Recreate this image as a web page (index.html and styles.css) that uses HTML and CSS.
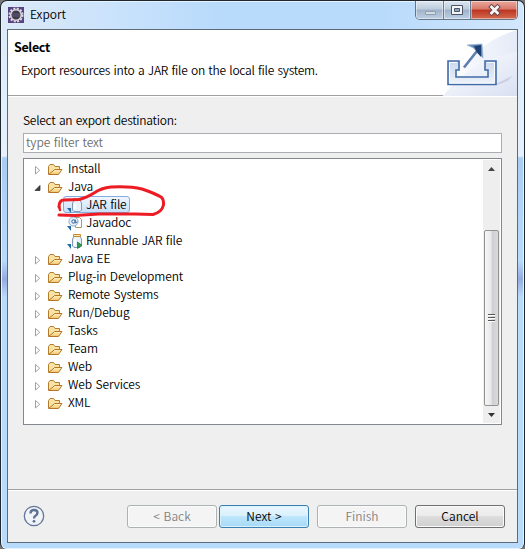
FILE: index.html
```
<!DOCTYPE html>
<html>
<head>
<meta charset="utf-8">
<title>Export</title>
<link rel="stylesheet" href="styles.css">
</head>
<body>
<svg class="defs" width="0" height="0">
  <defs>
    <linearGradient id="gold" x1="0" y1="0" x2="0" y2="1"><stop offset="0" stop-color="#fff3c4"/><stop offset="1" stop-color="#f1c56c"/></linearGradient>
    <linearGradient id="steel" x1="0" y1="0" x2="0" y2="1"><stop offset="0" stop-color="#cbd8ec"/><stop offset="1" stop-color="#eef3fa"/></linearGradient>
    <symbol id="folder" viewBox="0 0 16 16">
      <path d="M1.500 13V5.500L3 3.500h3.500l1.500 2h4.500v3" fill="#f9e3a4" stroke="#b57c2d"/>
      <path d="M1.500 13.500L6 10l1.500-1.500h7.500l-3.500 5z" fill="url(#gold)" stroke="#b57627"/>
    </symbol>
    <symbol id="closed" viewBox="0 0 8 10"><path d="M1.500 1.500v7.500l4.200-3.750z" fill="#fff" stroke="#a2a2a2"/></symbol>
    <symbol id="open" viewBox="0 0 8 10"><path d="M6 2.500v5H1z" fill="#444" stroke="#222" stroke-width=".7"/></symbol>
    <symbol id="jar" viewBox="0 0 17 16">
      <path d="M7 3.500L5.500 6v7L7 14.500h6l1.500-1.500V6L13 3.500z" fill="#e9f1fb" stroke="#8199b9"/>
      <path d="M8 6v6" stroke="#fff" stroke-width="2"/>
      <path d="M6.500 1.500h7v2h-7z" fill="#fce9b0" stroke="#c18a30"/>
    </symbol>
    <symbol id="corner" viewBox="0 0 5 5"><path d="M0 0h4v5z" fill="#206aa5"/></symbol>
  </defs>
</svg>

<div class="window">
  <div class="titlebar">
    <svg class="app-icon" width="16" height="16" viewBox="0 0 16 16">
      <path d="M0 0h16v16H0z" fill="#594383"/>
      <circle cx="8" cy="8" r="6.500" fill="none" stroke="#dedbe4" stroke-width="2" stroke-dasharray="2 1.400"/>
      <circle cx="8" cy="8" r="5.300" fill="#3d394c" stroke="#d8d8d8" stroke-width="1.600"/>
      <path d="M4 7h8M4 9h8" stroke="#655e78"/>
    </svg>
    <span class="caption">Export</span>
    <div class="controls">
      <div class="control minimize"><svg width="28" height="19"><path d="M9.500 10.500h10v3h-10z" fill="#d4dce5" stroke="#929faf"/></svg></div>
      <div class="control maximize"><svg width="26" height="19"><path d="M7.500 4.500h11v9h-11z" fill="#f3f4f6" stroke="#4d5669"/><path d="M10.500 7.500h5v3h-5z" fill="#8ea5bd" stroke="#4d5669"/></svg></div>
      <div class="control close"><svg width="46" height="19"><path d="M20.500 6l6 6M26.500 6l-6 6" stroke="#64474c" stroke-width="4.600" stroke-linecap="square"/><path d="M20.500 6l6 6M26.500 6l-6 6" stroke="#f6f6f6" stroke-width="2.700" stroke-linecap="square"/></svg></div>
    </div>
  </div>

  <div class="client">
    <div class="header">
      <div class="heading">
        <h1>Select</h1>
        <p>Export resources into a JAR file on the local file system.</p>
      </div>
      <svg class="banner" width="80" height="66" viewBox="0 0 80 66">
        <defs>
          <linearGradient id="sweep" x1="0" y1="0" x2="1" y2="0"><stop offset="0" stop-color="#fff"/><stop offset="1" stop-color="#e4eaf7"/></linearGradient>
          <linearGradient id="sweep2" x1="0" y1="0" x2="1" y2="1"><stop offset="0" stop-color="#fff"/><stop offset="1" stop-color="#d8e0f2"/></linearGradient>
        </defs>
        <path d="M80 0Q30 15 6 66h74z" fill="url(#sweep)"/>
        <path d="M80 22Q35 28 6 66h74z" fill="url(#sweep2)"/>
        <path d="M59 54l16-8q-3 6-16 9z" fill="#c8c7dc" opacity=".8"/>
        <path d="M11 31h11v9h-3v7h32v-7h-3v-9h11v23.500H11z" fill="url(#steel)" stroke="#426ba8" stroke-width="1.600"/>
        <path d="M20 32.500h-7.500V53h45V32.500H50" fill="none" stroke="#f7faff"/>
        <path d="M27 37.500L40 21" stroke="#5b7db0" stroke-width="2.600"/>
        <path d="M30 15l15-1 1 14-5-5-4.500-5z" fill="#5f88b8" stroke="#9fb7d4" stroke-width=".8"/>
        <path d="M37 16l7-1v12l-4.500-5z" fill="#1f4274"/>
      </svg>
    </div>

    <div class="body">
      <div class="label">Select an export destination:</div>
      <input class="filter" type="text" placeholder="type filter text">
      <div class="tree">
        <ul class="items">
          <li><svg class="arrow"><use href="#closed"/></svg><svg class="icon"><use href="#folder"/></svg><span>Install</span></li>
          <li><svg class="arrow"><use href="#open"/></svg><svg class="icon"><use href="#folder"/></svg><span>Java</span></li>
          <li class="leaf selected"><svg class="icon" viewBox="0 0 17 16"><use href="#jar"/><use href="#corner" x="0" y="11" width="5" height="5"/></svg><span>JAR file</span></li>
          <li class="leaf"><svg class="icon" viewBox="0 0 17 16"><path d="M8.500 2.500h4l2 2v8h-6z" fill="#fff" stroke="#a79970"/><circle cx="6.500" cy="6.500" r="4.600" fill="#e6eff9" stroke="#8aa9cd"/><circle cx="6.500" cy="6.500" r="1.700" fill="none" stroke="#31659d"/><path d="M8.200 4.500v3.300q1.500.7 1.800-1.300" fill="none" stroke="#31659d"/><use href="#corner" x="0" y="11" width="5" height="5"/></svg><span>Javadoc</span></li>
          <li class="leaf"><svg class="icon" viewBox="0 0 17 16"><use href="#jar"/><path d="M10.500 9l4.500 3.200-4.500 3.300z" fill="#2f9b51" stroke="#137135" stroke-width=".7"/><use href="#corner" x="0" y="11" width="5" height="5"/></svg><span>Runnable JAR file</span></li>
          <li><svg class="arrow"><use href="#closed"/></svg><svg class="icon"><use href="#folder"/></svg><span>Java EE</span></li>
          <li><svg class="arrow"><use href="#closed"/></svg><svg class="icon"><use href="#folder"/></svg><span>Plug-in Development</span></li>
          <li><svg class="arrow"><use href="#closed"/></svg><svg class="icon"><use href="#folder"/></svg><span>Remote Systems</span></li>
          <li><svg class="arrow"><use href="#closed"/></svg><svg class="icon"><use href="#folder"/></svg><span>Run/Debug</span></li>
          <li><svg class="arrow"><use href="#closed"/></svg><svg class="icon"><use href="#folder"/></svg><span>Tasks</span></li>
          <li><svg class="arrow"><use href="#closed"/></svg><svg class="icon"><use href="#folder"/></svg><span>Team</span></li>
          <li><svg class="arrow"><use href="#closed"/></svg><svg class="icon"><use href="#folder"/></svg><span>Web</span></li>
          <li><svg class="arrow"><use href="#closed"/></svg><svg class="icon"><use href="#folder"/></svg><span>Web Services</span></li>
          <li><svg class="arrow"><use href="#closed"/></svg><svg class="icon"><use href="#folder"/></svg><span>XML</span></li>
        </ul>
        <div class="scrollbar">
          <svg width="17" height="17"><path d="M5 11l3.500-4 3.500 4z" fill="#444"/></svg>
          <div class="thumb"><i></i><i></i><i></i></div>
          <svg width="17" height="17"><path d="M5 7h7l-3.500 4z" fill="#333"/></svg>
        </div>
        <!-- 手绘圈注 -->
        <svg class="mark" width="114" height="38" viewBox="0 0 114 38">
          <path d="M4 23Q4 16 9 16L24 15.500Q31 14 39 9Q46 4 56 3Q75 2 87 5Q99 9 106 13Q109 15 108.500 21Q107 28 98 30.500L80 30L44 30L20 31.500L4 31" fill="none" stroke="#ed1c24" stroke-width="3" stroke-linecap="round" stroke-linejoin="round"/>
          <path d="M4 22l1 4" stroke="#ed1c24" stroke-width="2.500" stroke-linecap="round"/>
        </svg>
      </div>
    </div>

    <div class="footer">
      <svg class="help" width="22" height="22" viewBox="0 0 22 22"><circle cx="11" cy="11" r="9.700" fill="#f1f3f7" stroke="#63779a" stroke-width="1.300"/><path d="M7.500 8.500Q7.500 5 11 5t3.500 3q0 1.500-2 2.700Q11 11.500 11 13.500" fill="none" stroke="#5d7194" stroke-width="2.300"/><circle cx="11" cy="16.300" r="1.400" fill="#5d7194"/></svg>
      <div class="buttons">
        <button disabled>&lt; Back</button>
        <button class="default">Next &gt;</button>
        <button class="apart" disabled>Finish</button>
        <button class="apart">Cancel</button>
      </div>
    </div>
  </div>
</div>
</body>
</html>
```
FILE: styles.css
```
* { box-sizing: border-box; }
body { margin: 0; background: #777; font: 350 12px/18px "Noto Sans CJK KR", "Noto Sans", sans-serif; letter-spacing: -.25px; word-spacing: 1px; color: #000; overflow: hidden; }
.defs { position: absolute; }
.window { display: flex; flex-direction: column; width: 525px; height: 549px; padding: 0 6px 6px; border: 1px solid #20272f; border-bottom: 0; border-radius: 7px 7px 6px 6px; background: linear-gradient(90deg, #dce9f7 0, #c9e2fc 120px, #b8dafb 220px, #b8dafb 380px, #d3e7fc 100%) 0 0 / 100% 28px no-repeat, linear-gradient(#d9e9fa 0, #e6f1fd 155px, #a9cdf3 157px, #b8dafb 260px, #93acdf 278px, #b8dafb 296px, #b8dafb 100%); box-shadow: inset 0 0 0 1px #e4f3ff; }
.titlebar { display: flex; flex: none; height: 28px; padding-left: 1px; }
.app-icon { margin-top: 6px; }
.caption { margin: 4px 0 0 6px; letter-spacing: 0; }
.controls { display: flex; height: 19px; margin-left: auto; border: 1px solid #657488; border-top: 0; border-radius: 0 0 5px 5px; overflow: hidden; }
.control { height: 18px; background: linear-gradient(#dce7f2 0, #bdcbdb 45%, #9fb2c9 50%, #bdd0e4 100%); border-right: 1px solid #6c7b90; box-shadow: inset 0 0 0 1px rgba(255, 255, 255, .45); }
.control svg { display: block; }
.minimize { width: 28px; }
.maximize { width: 27px; }
.close { width: 46px; border: 0; background: linear-gradient(#e9a99c 0, #d7796b 45%, #bd3421 50%, #d46b50 100%); }
.client { display: flex; flex-direction: column; flex: 1; border: 1px solid #5d6a78; background: #efefef; }
.header { display: flex; justify-content: space-between; flex: none; height: 66px; border-bottom: 1px solid #a0a0a0; background: #fff; }
.heading { padding: 8px 0 0 6px; }
.heading h1 { margin: 0; font-size: 12.5px; line-height: 18px; letter-spacing: -.35px; }
.heading p { margin: 5px 0 0 7px; line-height: 18px; }
.banner { display: block; }
.body { flex: 1; padding: 14px 15px 0; border-top: 1px solid #fff; }
.label { height: 22px; }
.filter { display: block; width: 479px; height: 20px; margin: 0 0 5px; padding: 0 2px 3px; border: 1px solid #abadb3; background: #fff; font: inherit; letter-spacing: -.1px; word-spacing: inherit; }
.filter::placeholder { color: #6d6d6d; opacity: 1; }
.tree { position: relative; display: flex; justify-content: space-between; width: 479px; height: 267px; padding: 1px; border: 1px solid #828790; background: #fff; }
.items { margin: 0; padding: 0 0 0 9px; letter-spacing: -.15px; list-style: none; }
.items li { display: flex; align-items: center; height: 18px; white-space: nowrap; }
.items span { margin-top: -2px; padding: 0 3px 0 5px; line-height: 16px; }
.arrow { width: 8px; height: 10px; margin: 2px 5px 0 0; }
.icon { width: 16px; height: 16px; }
.items .leaf { padding-left: 33px; }
.leaf .icon { width: 17px; margin-right: -3px; }
.items .selected { width: max-content; }
.selected span { position: relative; z-index: 0; }
.selected span::before { content: ""; position: absolute; z-index: -1; inset: 0 0 -1px -18px; border: 1px solid #84acdd; border-radius: 3px; background: linear-gradient(#eff6fe, #c9e0fa); }
.selected .icon { position: relative; z-index: 1; }
.scrollbar { display: flex; flex-direction: column; width: 17px; height: 263px; background: #eee; }
.scrollbar > svg { flex: none; }
.thumb { display: flex; flex-direction: column; align-items: center; justify-content: center; gap: 1px; width: 15px; height: 176px; margin: auto 1px 0; border: 1px solid #929292; border-radius: 2px; background: linear-gradient(90deg, #f6f6f6 0, #e7e7e8 48%, #cfcfd3 55%, #dadadd 100%); }
.thumb i { width: 7px; height: 2px; border-bottom: 1px solid #fff; background: #555; }
.mark { position: absolute; left: 31px; top: 25px; z-index: 2; }
.footer { display: flex; flex: none; justify-content: space-between; height: 53px; padding: 15px 12px 0 15px; border-top: 1px solid #a0a0a0; box-shadow: inset 0 1px #fff; }
.buttons { display: flex; }
button { width: 90px; height: 23px; margin: 0 0 0 2px; padding: 0 0 2px; border: 1px solid #707070; border-radius: 3px; background: linear-gradient(#f2f2f2 0, #ebebeb 48%, #dddddd 50%, #cfcfcf 100%); box-shadow: inset 0 0 0 1px #fbfbfb; font: inherit; line-height: 19px; word-spacing: 1px; color: #000; }
button.default { border-color: #3c7fb1; background: linear-gradient(#eaf6fd 0, #d9f0fc 48%, #bee6fd 50%, #a7d9f5 100%); box-shadow: inset 0 0 0 1px #d8f3fd; }
button:disabled { border-color: #adb2b5; background: #f4f4f4; color: #838383; }
button.apart { margin-left: 8px; }
```
